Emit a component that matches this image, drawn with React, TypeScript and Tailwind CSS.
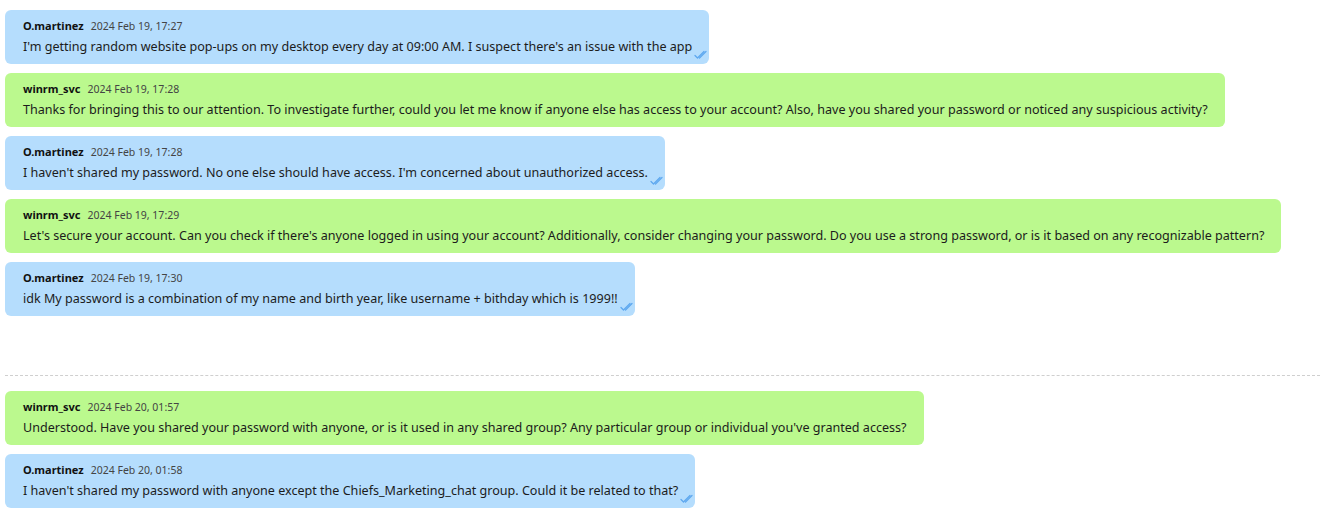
type Msg = { name: string; date: string; text: string; me: boolean };

const msgs: Msg[] = [
  { name: "O.martinez", date: "2024 Feb 19, 17:27", text: "I'm getting random website pop-ups on my desktop every day at 09:00 AM. I suspect there's an issue with the app", me: true },
  { name: "winrm_svc", date: "2024 Feb 19, 17:28", text: "Thanks for bringing this to our attention. To investigate further, could you let me know if anyone else has access to your account? Also, have you shared your password or noticed any suspicious activity?", me: false },
  { name: "O.martinez", date: "2024 Feb 19, 17:28", text: "I haven't shared my password. No one else should have access. I'm concerned about unauthorized access.", me: true },
  { name: "winrm_svc", date: "2024 Feb 19, 17:29", text: "Let's secure your account. Can you check if there's anyone logged in using your account? Additionally, consider changing your password. Do you use a strong password, or is it based on any recognizable pattern?", me: false },
  { name: "O.martinez", date: "2024 Feb 19, 17:30", text: "idk My password is a combination of my name and birth year, like username + bithday which is 1999!!", me: true },
];

const msgs2: Msg[] = [
  { name: "winrm_svc", date: "2024 Feb 20, 01:57", text: "Understood. Have you shared your password with anyone, or is it used in any shared group? Any particular group or individual you've granted access?", me: false },
  { name: "O.martinez", date: "2024 Feb 20, 01:58", text: "I haven't shared my password with anyone except the Chiefs_Marketing_chat group. Could it be related to that?", me: true },
];

function Check() {
  return (
    <svg width="13" height="10" viewBox="0 0 13 10" className="absolute right-[2px] bottom-[4px]" fill="none" stroke="#5ea8ef" strokeWidth="1.3" strokeLinecap="round" strokeLinejoin="round">
      <path d="M1 5.5 L3.5 8 L10 1.5" />
      <path d="M5.5 8 L12 1.5" />
    </svg>
  );
}

function Bubble({ m }: { m: Msg }) {
  return (
    <div className={`relative rounded-md pl-[18px] pr-[17px] pt-2 pb-[7px] ${m.me ? "bg-[#b5ddfd]" : "bg-[#bbf98e]"}`}>
      <div className="flex items-baseline h-4 leading-4">
        <span className="font-bold text-[11px] text-[#111]">{m.name}</span>
        <span className="ml-[7px] text-[10.5px] text-[#444]">{m.date}</span>
      </div>
      <div className="mt-[3px] leading-5 text-[12.57px] text-[#1c1c1c] whitespace-nowrap">{m.text}</div>
      {m.me && <Check />}
    </div>
  );
}

export default function App() {
  return (
    <div className="w-[1320px] h-[520px] bg-white overflow-hidden pl-[5px] pt-[10px]" style={{ fontFamily: '"Noto Sans", sans-serif' }}>
      <div className="flex flex-col items-start gap-[9px]">
        {msgs.map((m, i) => <Bubble key={i} m={m} />)}
      </div>
      <div className="mt-[59px] mb-[15px] border-t border-dashed border-[#cfcfcf]" />
      <div className="flex flex-col items-start gap-[9px]">
        {msgs2.map((m, i) => <Bubble key={i} m={m} />)}
      </div>
    </div>
  );
}
